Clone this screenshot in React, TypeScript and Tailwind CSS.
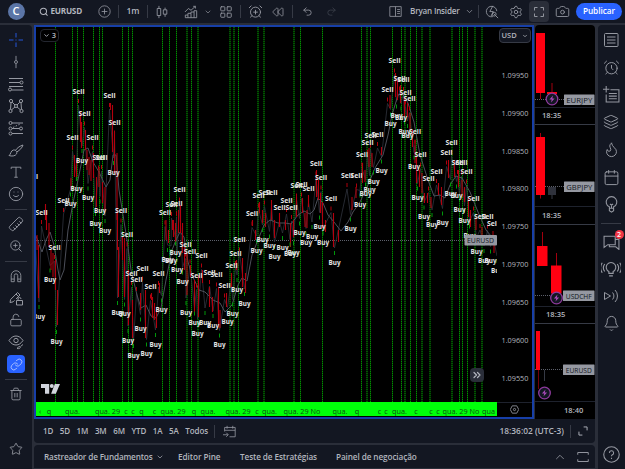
import React from 'react';
import {
  AlarmClock,
  AlarmClockPlus,
  Bell,
  Calendar,
  Camera,
  ChevronDown,
  ChevronsRight,
  ChevronUp,
  Flame,
  Layers,
  LayoutGrid,
  Lightbulb,
  Link,
  LockOpen,
  Redo2,
  Rewind,
  Ruler,
  Search,
  Settings,
  Smile,
  Star,
  Trash2,
  Undo2,
  ZoomIn,
} from 'lucide-react';

type Point = [number, number];

const FONT = "font-['Open_Sans','Noto_Sans',sans-serif]";

const Glyph: React.FC<{ children: React.ReactNode; size?: number; className?: string }> = ({
  children,
  size = 16,
  className = '',
}) => (
  <svg
    width={size}
    height={size}
    viewBox="0 0 16 16"
    fill="none"
    stroke="currentColor"
    strokeWidth="1"
    className={`shrink-0 ${className}`}
  >
    {children}
  </svg>
);

// x positions of the session lines; the faint ones fall between two pixels
const brightLines = [
  55.5, 72.5, 77.5, 83.5, 93.5, 99.5, 102.5, 122.5, 128.5, 132.5, 162.5, 169.5, 176.5, 191.5, 238.5, 300.5, 322.5,
  361.5, 370.5, 392.5, 401.5, 410.5, 416.5, 459.5, 462.5, 467.5,
];
const faintLines = [187, 198, 230, 234, 258, 264, 294, 367, 405, 422, 430, 452, 475, 482];

const sells: Point[] = [
  [32, 176], [41.5, 212], [54.5, 247], [63.5, 200], [72.5, 137.5], [78.5, 91], [84.5, 113.5], [92.5, 137.5],
  [98.5, 157.5], [101.5, 157], [109.5, 95], [114.5, 122.5], [121, 210.5], [127, 234.5], [131.5, 273], [136.5, 279],
  [142.5, 268.5], [150.5, 286.5], [158.5, 273], [165, 212.5], [171.5, 204], [176.5, 203.5], [179.5, 189.5],
  [185.5, 244.5], [190, 251.5], [196.5, 275.5], [201.5, 255.5], [209.5, 272], [216.5, 274.5], [224.5, 285.5],
  [231.5, 265.5], [235.5, 253], [239.5, 239.5], [252, 213.5], [258.5, 195.5], [264.5, 192.5], [271.5, 192.5],
  [279.5, 207.5], [286.5, 200], [291.5, 207], [296.5, 185.5], [301.5, 184.5], [308.5, 188.5], [316, 163.5],
  [321, 177.5], [331, 198.5], [347, 175], [356.5, 175.5], [362, 154.5], [367.5, 142], [370.5, 135.5], [377.5, 134],
  [387.5, 89.5], [394.5, 60.5], [399.5, 78.5], [403.5, 79], [405.5, 92.5], [409.5, 98.5], [415, 131.5],
  [420.5, 154.5], [428.5, 178.5], [436.5, 171], [446.5, 152.5], [451.5, 142], [457.5, 162], [461.5, 162.5],
  [466.5, 171.5], [473.5, 198.5], [480, 216], [487.5, 216.5], [493, 223],
];

const buys: Point[] = [
  [39, 316], [50, 279.5], [56.5, 341], [70.5, 203.5], [76.5, 188], [82, 160], [88, 197.5], [95.5, 223],
  [100, 210.5], [105, 230], [113.5, 172], [117.5, 312], [124.5, 313.5], [128, 340], [133.5, 355], [140.5, 328.5],
  [146.5, 353.5], [155.5, 344], [161.5, 309.5], [167.5, 259], [171, 260], [175.5, 252.5], [177, 269],
  [182.5, 281.5], [186, 312], [194.5, 322.5], [197.5, 333], [205, 322], [213, 325], [219.5, 344.5], [227.5, 321.5],
  [232.5, 313.5], [237, 289], [244.5, 303], [256.5, 250], [262.5, 239], [269.5, 245.5], [274.5, 256], [282.5, 247],
  [290, 253.5], [293.5, 252], [299.5, 232.5], [306, 242.5], [312, 236], [319.5, 226.5], [323, 242.5], [334.5, 262],
  [350.5, 228.5], [360, 204.5], [365.5, 193.5], [369.5, 189.5], [373.5, 181.5], [381.5, 170.5], [390.5, 123.5],
  [396.5, 115.5], [401, 117.5], [404.5, 131.5], [407.5, 135], [414, 166.5], [417.5, 197.5], [424, 216.5],
  [432, 224], [442.5, 222.5], [450.5, 193.5], [456.5, 195.5], [459.5, 209], [464.5, 220], [469.5, 235.5],
  [476.5, 251.5], [484, 260], [490.5, 260.5], [497, 270],
];

// [x, top, bottom]
const candles: [number, number, number][] = [
  [37, 235, 250], [38.5, 245, 298], [45.5, 204, 220], [46.5, 210, 230], [49, 223, 247], [51, 250, 270],
  [53, 253, 277], [55.5, 260, 290], [57.5, 290, 325], [71, 178, 190], [74.5, 155, 177], [76.5, 160, 180],
  [80.5, 112, 142], [81.5, 122, 148], [85.5, 130, 150], [87, 150, 170], [89, 157, 175], [91, 160, 181],
  [93.5, 153, 178], [96.5, 177, 207], [99, 167, 187], [102.5, 182, 203], [105, 187, 212], [110.5, 103, 110],
  [112.5, 105, 152], [114.5, 132, 173], [117, 153, 220], [117.5, 213, 250], [118.5, 247, 297], [122.5, 237, 260],
  [124.5, 238, 297], [128.5, 270, 325], [132.5, 300, 338], [140.5, 293, 310], [145.5, 290, 338], [151.5, 293, 300],
  [152.5, 297, 318], [154.5, 303, 320], [156.5, 310, 328], [159.5, 283, 293], [166, 220, 240], [168.5, 230, 243],
  [172.5, 220, 230], [173.5, 220, 237], [175.5, 223, 243], [178.5, 210, 233], [180.5, 205, 233], [182.5, 223, 253],
  [184.5, 247, 270], [187, 253, 295], [190.5, 265, 277], [194.5, 280, 313], [198.5, 275, 317], [202.5, 270, 283],
  [209.5, 287, 307], [212.5, 297, 312], [218.5, 287, 327], [220, 310, 328], [226.5, 293, 307], [231.5, 273, 287],
  [236.5, 260, 270], [242.5, 258, 287], [245.5, 273, 293], [252.5, 220, 226], [255.5, 230, 240], [259.5, 202, 213],
  [262.5, 210, 223], [265.5, 213, 227], [271.5, 200, 220], [274.5, 220, 238], [279.5, 213, 227], [285.5, 220, 230],
  [290.5, 223, 247], [293.5, 220, 237], [296.5, 197, 217], [302.5, 198, 213], [305, 213, 227], [307, 210, 228],
  [308.5, 195, 207], [316.5, 170, 197], [318.5, 180, 200], [320.5, 193, 213], [322.5, 202, 228], [325.5, 220, 232],
  [333.5, 213, 247], [338.5, 230, 242], [352, 197, 210], [356, 187, 198], [362.5, 163, 183], [365, 170, 182],
  [369, 148, 167], [372, 153, 167], [381.5, 147, 155], [390, 95, 108], [395.5, 73, 97], [397.5, 80, 100],
  [400.5, 85, 103], [404.5, 97, 117], [407.5, 103, 117], [410, 113, 130], [412.5, 130, 147], [415, 140, 163],
  [416.5, 157, 183], [419.5, 170, 187], [422, 173, 193], [424.5, 193, 203], [427.5, 193, 203], [431, 197, 208],
  [438.5, 183, 195], [441.5, 187, 205], [448.5, 160, 178], [454.5, 160, 177], [458.5, 170, 187], [462, 180, 197],
  [464.5, 187, 202], [468.5, 197, 217], [470.5, 210, 227], [476, 217, 230], [482, 227, 237], [494, 240, 253],
];

const average =
  '36,236 42,252 46,240 50,232 54,245 58,270 60,280 64,270 68,230 73,203 78,180 84,150 88,148 93,162 99,172 106,187 110,180 113,155 116,155 119,190 123,215 127,240 131,270 137,295 141,308 146,305 151,316 156,318 161,308 166,280 172,250 176,240 180,232 184,237 188,262 192,275 199,290 205,292 213,300 220,303 225,312 232,305 238,285 242,278 247,281 252,255 258,240 264,225 270,220 278,223 285,223 291,224 298,215 304,211 310,214 314,210 318,198 323,203 328,215 334,222 341,231 348,222 353,212 360,202 368,185 375,168 383,155 388,135 392,115 398,95 402,93 408,103 414,122 420,155 428,180 434,196 440,195 445,198 450,185 456,176 462,178 470,192 478,212 486,230 497,243';

const swing = [...sells.map(([x, y]) => [x, y + 14]), ...buys.map(([x, y]) => [x, y - 14])]
  .sort((a, b) => a[0] - b[0])
  .map((p) => p.join(','))
  .join(' ');

const dates: [number, string][] = [
  [40, '‹'], [49, 'q'], [72.5, 'qua.'], [107.5, 'qua. 29'], [126, 'c'], [133, 'c'], [141.5, 'q'], [154.5, 'c'],
  [173, 'qua. 29'], [194, 'q'], [208, 'qua.'], [238, 'qua. 29'], [257, 'c'], [269.5, 'qua.'], [302, 'qua. 29 No'],
  [340, 'qua.'], [357, 'q'], [379.5, 'c'], [386, 'c'], [399.5, 'qua.'], [416, 'c'], [431, 'c'], [438, 'c'],
  [461, 'qua. 29 No'], [488.5, 'qua'],
];

const prices = ['1.09950', '1.09900', '1.09850', '1.09800', '1.09750', '1.09700', '1.09650', '1.09600', '1.09550'];

const Plot: React.FC = () => (
  <svg width="461" height="375" viewBox="36 27 461 375" className="block">
    {[...brightLines, ...faintLines].map((x) => (
      <g key={x}>
        <line x1={x} x2={x} y1="27" y2="402" stroke="#003800" />
        <line x1={x} x2={x} y1="27" y2="402" stroke="#009000" strokeDasharray="1 1" />
      </g>
    ))}
    <line x1="36" x2="497" y1="240.5" y2="240.5" stroke="#5d606b" strokeDasharray="1 1" />
    <polyline points={swing} fill="none" stroke="#30333d" strokeWidth="0.8" />
    <polyline points={average} fill="none" stroke="#4c4f59" strokeWidth="1" />
    {candles.map(([x, top, bottom]) => (
      <line key={`${x}-${top}`} x1={x} x2={x} y1={top} y2={bottom} stroke="#b4000e" strokeWidth="1.1" />
    ))}
    {sells.map(([x, y]) => (
      <line key={`s${x}`} x1={x} x2={x} y1={y + 8} y2={y + 12} stroke="#b0000d" />
    ))}
    {buys.map(([x, y]) => (
      <line key={`b${x}`} x1={x} x2={x} y1={y - 11} y2={y - 7} stroke="#00960a" />
    ))}
    <g fill="#e6e6e6" fontSize="7.8" fontWeight="700" textAnchor="middle">
      {sells.map(([x, y]) => (
        <text key={`st${x}`} x={x} y={y + 2.7} textLength="12" lengthAdjust="spacingAndGlyphs">
          Sell
        </text>
      ))}
      {buys.map(([x, y]) => (
        <text key={`bt${x}`} x={x} y={y + 2.6} textLength="12" lengthAdjust="spacingAndGlyphs">
          Buy
        </text>
      ))}
    </g>
    <rect x="464.5" y="235" width="32.5" height="10.5" rx="1" fill="#9598a1" />
    <text x="480.5" y="243" fontSize="7.5" textAnchor="middle" fill="#131722" textLength="27" lengthAdjust="spacingAndGlyphs">
      EURUSD
    </text>
    <g fill="#d1d4dc">
      <path d="M41 384h8.2v9.8h-4.2v-5.8H41z" />
      <circle cx="51.8" cy="386" r="2" />
      <path d="M54.8 384H60l-4.2 9.8h-4.7z" />
    </g>
  </svg>
);

const Bolt: React.FC<{ x: number; y: number }> = ({ x, y }) => (
  <g transform={`translate(${x} ${y})`}>
    <circle r="5.8" fill="#131722" stroke="#8e3a9d" strokeWidth="1.3" />
    <path d="M1 -3.4L-2.6 0.5H-0.3L-1 3.4L2.6 -0.5H0.3z" fill="#a84ab8" />
  </g>
);

const MiniChart: React.FC<{
  symbol: string;
  time: string;
  plotClass: string;
  timeClass: string;
  height: number;
  line: number;
  labelX: number;
  children: React.ReactNode;
}> = ({ symbol, time, plotClass, timeClass, height, line, labelX, children }) => (
  <div className="flex flex-col bg-black">
    <div className={`border-b border-[#1e222d] ${plotClass}`}>
      <svg width="60" height={height} viewBox={`0 0 60 ${height}`} className="block">
        <line x1="0" x2={labelX} y1={line} y2={line} stroke="#5d606b" strokeDasharray="1 1" />
        {children}
        <rect x={labelX} y={line - 5} width={59.5 - labelX} height="10.5" rx="0.5" fill="#9598a1" />
        <text
          x={(labelX + 59.5) / 2}
          y={line + 3}
          fontSize="7.5"
          textAnchor="middle"
          fill="#131722"
          textLength="26"
          lengthAdjust="spacingAndGlyphs"
        >
          {symbol}
        </text>
      </svg>
    </div>
    <div className={`flex items-center text-[7.6px] font-semibold text-[#b2b5be] ${timeClass}`}>{time}</div>
  </div>
);

const Separator = () => <div className="h-[13px] w-px shrink-0 bg-[#363a45]" />;

const Header: React.FC = () => (
  <header className="flex h-[23px] shrink-0 items-center bg-[#131722] text-[#9598a1]">
    <div className="flex w-8 shrink-0 justify-center">
      <div className="flex h-[17px] w-[17px] items-center justify-center rounded-full bg-[#5b75a6] text-[11px] font-semibold text-white">
        C
      </div>
    </div>
    <div className="flex w-[58px] shrink-0 items-center gap-[2px] pl-[7px] text-[#b2b5be]">
      <Search size={9.5} strokeWidth={2.6} className="shrink-0" />
      <span className="text-[8.2px] font-bold tracking-[-0.25px]">EURUSD</span>
    </div>
    <div className="flex w-7 shrink-0 justify-center">
      <Glyph size={13}>
        <circle cx="8" cy="8" r="7" />
        <path d="M8 4.5v7M4.5 8h7" />
      </Glyph>
    </div>
    <Separator />
    <div className="w-7 shrink-0 text-center text-[8.6px] font-semibold text-[#b2b5be]">1m</div>
    <Separator />
    <div className="flex w-7 shrink-0 justify-center">
      <Glyph size={14}>
        <path d="M4.5 1v3M4.5 12v3M2.5 4h4v8h-4zM11.5 3v2.500M11.5 10.500v3M9.500 5.500h4v5h-4z" />
      </Glyph>
    </div>
    <div className="flex w-[29px] shrink-0 justify-center">
      <Glyph size={14}>
        <path d="M1.500 14.500v-3h3v-2h3.500v-1.500h3.500v-1.500h3v8zM4.500 11.500v3M8 9.500v5M11.500 8v6.500M1 8l4-4 3 2 5-4.500M10.500 1.500h2.500v2.500" />
      </Glyph>
    </div>
    <div className="flex w-1.5 shrink-0 justify-center">
      <ChevronDown size={8} className="shrink-0" />
    </div>
    <div className="flex w-[29px] shrink-0 justify-center">
      <LayoutGrid size={14} strokeWidth={1.5} />
    </div>
    <Separator />
    <div className="flex w-7 shrink-0 justify-center">
      <AlarmClockPlus size={15} strokeWidth={1.5} />
    </div>
    <div className="flex w-[23px] shrink-0 justify-start pl-[3px]">
      <Rewind size={12} strokeWidth={1.6} />
    </div>
    <Separator />
    <div className="flex w-7 shrink-0 justify-center">
      <Undo2 size={11} strokeWidth={1.8} />
    </div>
    <div className="flex w-5 shrink-0 justify-center text-[#3c404b]">
      <Redo2 size={11} strokeWidth={1.8} />
    </div>
    <div className="flex min-w-0 flex-1 items-center justify-end">
      <Glyph size={13} className="mr-[8px]">
        <path d="M1 2h14v12H1zM8 2v12M10 5.500h3.500M10 8h3.500M10 10.500h3.500" />
      </Glyph>
      <span className="w-[53px] whitespace-nowrap text-[8.1px] font-semibold tracking-[-0.2px] text-[#b2b5be]">
        Bryan Insider
      </span>
      <ChevronDown size={9} className="ml-0.5 mr-1" />
      <Separator />
      <div className="flex w-[26px] justify-center">
        <Glyph size={14}>
          <path d="M13.500 7A6 6 0 1 0 9 13.300M11.700 11.700L15 15M9.800 9.800l2 2M9 1L5.500 7.500h4L7 12.500" />
          <circle cx="10.500" cy="10.500" r="2.200" />
        </Glyph>
      </div>
      <div className="flex w-6 pl-[4px]">
        <Settings size={14} strokeWidth={1.5} />
      </div>
      <div className="flex h-[21px] w-5 items-center justify-center rounded-sm bg-[#2a2e39]">
        <Glyph size={12}>
          <path d="M2 6V2h4M10 2h4v4M14 10v4h-4M6 14H2v-4" strokeWidth="1.3" />
        </Glyph>
      </div>
      <div className="flex w-[27px] justify-center">
        <Camera size={15} strokeWidth={1.4} />
      </div>
      <button className="mr-[3px] h-[17px] w-[46px] rounded-full bg-[#2962ff] text-[8.2px] font-semibold text-white">
        Publicar
      </button>
    </div>
  </header>
);

const Cell: React.FC<{ children: React.ReactNode }> = ({ children }) => (
  <div className="flex h-[22px] w-full shrink-0 items-center justify-center">{children}</div>
);

const Rule = () => <div className="my-[3.5px] h-px w-[22px] shrink-0 bg-[#363a45]" />;

const DrawingBar: React.FC = () => (
  <aside className="flex w-8 shrink-0 flex-col items-center rounded-tr-sm bg-[#131722] pt-[4px] text-[#9598a1]">
    <Cell>
      <Glyph className="text-[#2456d8]">
        <path d="M8 1v4.500M8 10.500v4.500M1 8h4.500M10.500 8h4.500M7.500 8h1" />
      </Glyph>
    </Cell>
    <Cell>
      <Glyph size={14}>
        <path d="M8 1v5M8 10v5" />
        <circle cx="8" cy="8" r="1.700" />
      </Glyph>
    </Cell>
    <Cell>
      <Glyph>
        <path d="M1 2.500h14M1 6.500h11M1 10.500h14M3.500 14h12" />
        <circle cx="13.500" cy="6.500" r="1.500" />
        <circle cx="2" cy="13.500" r="1.500" />
      </Glyph>
    </Cell>
    <Cell>
      <Glyph>
        <circle cx="3" cy="3" r="1.600" />
        <circle cx="13" cy="3" r="1.600" />
        <circle cx="8" cy="8" r="1.500" />
        <circle cx="2.500" cy="13" r="1.600" />
        <circle cx="13.500" cy="13" r="1.600" />
        <path d="M3 4.600L2.500 11.400M13 4.600l.5 6.800M4.200 4.200l2.800 2.800M11.800 4.200L9 7M3.600 11.800L7 9M12.400 11.800L9 9" />
      </Glyph>
    </Cell>
    <Cell>
      <Glyph>
        <circle cx="2.500" cy="3" r="1.500" />
        <circle cx="2.500" cy="8.500" r="1.500" />
        <circle cx="2.500" cy="13.500" r="1.500" />
        <circle cx="13" cy="8.500" r="1.500" />
        <path d="M4 3h11M4 13.500h11M4 8.500h7.500" />
        <path d="M5 7.500L13 3.500" strokeDasharray="1.500 1.500" />
      </Glyph>
    </Cell>
    <Cell>
      <Glyph>
        <path d="M1 13.500c2-1 1.500-5 4.500-5.500 2.500-.3 4 2 3 4-1.200 2.200-5 2.500-7.500 1.500zM7.500 8.300C9.500 5.500 12 4 15 3c-1 3-3 5-6.200 7" />
      </Glyph>
    </Cell>
    <Cell>
      <Glyph size={14}>
        <path d="M2.500 4.500V2.500h11v2M8 2.500v11.500M6 14h4" />
      </Glyph>
    </Cell>
    <Cell>
      <Smile size={16} strokeWidth={1.4} />
    </Cell>
    <Rule />
    <Cell>
      <Ruler size={16} strokeWidth={1.4} className="rotate-90" />
    </Cell>
    <Cell>
      <ZoomIn size={14} strokeWidth={1.5} />
    </Cell>
    <Rule />
    <Cell>
      <Glyph size={14}>
        <path d="M2.500 14.500V7.500a5.500 5.500 0 0 1 11 0v7h-3.500V7.500a2 2 0 0 0-4 0v7zM2.500 11.500H6M10 11.500h3.500" />
      </Glyph>
    </Cell>
    <Cell>
      <Glyph>
        <path d="M2 12.500l.6-3L9.500 2.500l2.500 2.500-4 4M2 12.500l3-.6 1.500-1.500M8 4l2.500 2.500" />
        <path d="M8.500 10.500h6v4.500h-6zM10 10.500V9a1.500 1.500 0 0 1 3 0" />
      </Glyph>
    </Cell>
    <Cell>
      <LockOpen size={14} strokeWidth={1.5} />
    </Cell>
    <Cell>
      <Glyph>
        <path d="M1 6.500C3 3.500 5.300 2 8 2s5 1.500 7 4.500C13 9.500 10.700 11 8 11S3 9.500 1 6.500z" />
        <circle cx="8" cy="6.500" r="2.200" />
        <path d="M9 14.500c1-.3 1-2 2.300-2 1.200 0 1.400 1.300.4 1.800-.8.400-1.900.4-2.700.2zM12.500 12.500L15 10.500" />
      </Glyph>
    </Cell>
    <Cell>
      <div className="flex h-[18px] w-[18px] items-center justify-center rounded-sm bg-[#2962ff] text-[#c3d2ff]">
        <Link size={13} strokeWidth={1.500} />
      </div>
    </Cell>
    <Rule />
    <Cell>
      <Trash2 size={14} strokeWidth={1.5} />
    </Cell>
    <div className="mt-auto pb-[9px]">
      <Cell>
        <Star size={14} strokeWidth={1.5} />
      </Cell>
    </div>
  </aside>
);

const WidgetCell: React.FC<{ children: React.ReactNode }> = ({ children }) => (
  <div className="relative flex h-[27.500px] w-full shrink-0 items-center justify-center">{children}</div>
);

const WidgetBar: React.FC = () => (
  <aside className="flex w-[27.500px] shrink-0 flex-col items-center rounded-tl-sm bg-[#131722] pt-px text-[#9598a1]">
    <WidgetCell>
      <Glyph>
        <rect x="1.500" y="1.500" width="13.500" height="13" rx="1" />
        <path d="M4 5h8.500M4 8h8.500M4 11h8.500" />
      </Glyph>
    </WidgetCell>
    <WidgetCell>
      <AlarmClock size={17} strokeWidth={1.4} />
    </WidgetCell>
    <WidgetCell>
      <Glyph size={17}>
        <path d="M3 0v6M0 3h6M7 3.500h8v11.500H3V8M5.500 7H13M5.500 9.500H13M5.500 12H13" />
      </Glyph>
    </WidgetCell>
    <WidgetCell>
      <Layers size={16} strokeWidth={1.5} />
    </WidgetCell>
    <WidgetCell>
      <Flame size={17} strokeWidth={1.4} />
    </WidgetCell>
    <WidgetCell>
      <Calendar size={17} strokeWidth={1.4} />
    </WidgetCell>
    <WidgetCell>
      <Glyph size={17}>
        <path d="M6 11.500V10.200A5 5 0 1 1 10 10.200v1.300zM6 11.500v2.300l2 1.400 2-1.400v-2.300M8 11.500V8.500M6.500 7.500L8 8.500l1.500-1" />
      </Glyph>
    </WidgetCell>
    <div className="my-[4px] h-px w-5 shrink-0 bg-[#363a45]" />
    <WidgetCell>
      <Glyph size={17}>
        <path d="M1 3h10.500v8H4.500L1 13.500zM11.500 6H15v9.500L12 13H6v-2" />
      </Glyph>
      <span className="absolute right-[1.500px] top-[2px] flex h-[9px] w-[9px] items-center justify-center rounded-full bg-[#f23645] text-[7px] font-semibold leading-none text-white">
        2
      </span>
    </WidgetCell>
    <WidgetCell>
      <Glyph size={20}>
        <path d="M6.300 11.500V10A3.800 3.800 0 1 1 9.700 10v1.500zM6.500 13.500h3M3 4a5 5 0 0 0 0 6M1 3a7 7 0 0 0 0 8M13 4a5 5 0 0 1 0 6M15 3a7 7 0 0 1 0 8" strokeWidth="0.9" />
      </Glyph>
    </WidgetCell>
    <WidgetCell>
      <Glyph>
        <path d="M1.500 4.500v7L7.500 8zM9.500 4.500a5 5 0 0 1 0 7M12 2a8.500 8.500 0 0 1 0 12" />
      </Glyph>
    </WidgetCell>
    <WidgetCell>
      <Bell size={17} strokeWidth={1.4} />
    </WidgetCell>
    <div className="mt-auto pb-[6.500px]">
      <Glyph size={17}>
        <circle cx="8" cy="8" r="7.300" />
        <path d="M6 6.500a2 2 0 1 1 2.800 1.800c-.6.300-.8.600-.8 1.400M8 11v1.200" />
      </Glyph>
    </div>
  </aside>
);

const ranges = ['1D', '5D', '1M', '3M', '6M', 'YTD', '1A', '5A', 'Todos'];

const App: React.FC = () => (
  <div className={`flex h-[469px] w-[625px] flex-col gap-[2px] overflow-hidden bg-[#2a2e39] ${FONT}`}>
    <Header />
    <div className="flex min-h-0 flex-1">
      <DrawingBar />
      <div className="ml-[2px] flex min-w-0 flex-1 flex-col">
        {/* Charts */}
        <div className="flex h-[394px] shrink-0">
          <div className="relative w-[500px] shrink-0 border-2 border-[#173fa8] bg-black">
            <div className="flex h-[375px]">
              <Plot />
              <div className="flex flex-1 flex-col items-center">
                <div className="mt-px flex h-[15px] w-8 shrink-0 items-center justify-between rounded-sm border border-[#363a45] bg-[#131722] px-[2px] text-[7.5px] font-semibold text-[#b2b5be]">
                  USD
                  <ChevronDown size={6} strokeWidth={3} />
                </div>
                <div className="flex flex-col pl-px pt-[13.5px]">
                  {prices.map((price) => (
                    <div key={price} className="flex h-[37.900px] items-center text-[7.3px] font-medium leading-none text-[#b2b5be]">
                      {price}
                    </div>
                  ))}
                </div>
              </div>
            </div>
            <div className="flex h-[14px]">
              <svg width="461" height="14" viewBox="36 402 461 14" className="block shrink-0 bg-[#00ff0a]">
                {dates.map(([x, label]) => (
                  <text key={x} x={x} y="413.500" fontSize="7.3" fontWeight="500" textAnchor="middle" fill="#0d4f12">
                    {label}
                  </text>
                ))}
              </svg>
              <div className="flex flex-1 items-center justify-center border-t border-[#1e222d] text-[#9598a1]">
                <Glyph size={9}>
                  <path d="M4 1.500h8L15.500 8 12 14.500H4L.5 8z" strokeWidth="1.500" />
                  <circle cx="8" cy="8" r="2" strokeWidth="1.500" />
                </Glyph>
              </div>
            </div>
            <div className="absolute left-[4px] top-[2px] flex h-[13px] w-[19px] items-center justify-center gap-[2px] rounded-sm border border-[#23262f] bg-black text-[7.500px] font-semibold text-[#b2b5be]">
              <ChevronDown size={7} strokeWidth={3} />3
            </div>
            <div className="absolute left-[434px] top-[341px] flex h-[14px] w-[14px] items-center justify-center rounded-sm bg-[#2a2e39] text-[#b2b5be]">
              <ChevronsRight size={12} strokeWidth={2.4} />
            </div>
          </div>

          <div className="ml-[1px] flex w-[60px] shrink-0 flex-col gap-px overflow-hidden rounded-t-sm bg-[#363a45]">
            <MiniChart symbol="EURJPY" time="18:35" plotClass="h-[83px]" timeClass="h-4 pl-[7px]" height={82} line={74.5} labelX={29}>
              <path d="M5.500 68v6M17 58v10" stroke="#a3000e" />
              <rect x="1" y="8" width="9" height="60" fill="#ff0011" />
              <rect x="12" y="67" width="10" height="2" fill="#ff0011" />
              <Bolt x={17} y={74} />
            </MiniChart>
            <MiniChart symbol="GBPJPY" time="18:35" plotClass="h-[82px]" timeClass="h-[17px] pl-[7px]" height={81} line={61.5} labelX={29}>
              <path d="M5.500 8v65.500" stroke="#a3000e" />
              <path d="M17 70v4" stroke="#363a45" />
              <rect x="1" y="12" width="9" height="58" fill="#ff0011" />
              <rect x="13" y="62" width="8" height="8" fill="#2f323c" />
            </MiniChart>
            <MiniChart symbol="USDCHF" time="18:35" plotClass="h-[82px]" timeClass="h-4 pl-[11px]" height={81} line={70.5} labelX={28}>
              <path d="M7.500 7v14M21.500 28v14" stroke="#a3000e" />
              <rect x="2" y="21" width="10.500" height="20" fill="#ff0011" />
              <rect x="16" y="40.500" width="10.500" height="28" fill="#ff0011" />
              <Bolt x={21.5} y={73} />
            </MiniChart>
            <MiniChart symbol="EURUSD" time="18:40" plotClass="h-[78px]" timeClass="h-[17px] pl-[29px]" height={77} line={45.500} labelX={28}>
              <path d="M3.500 46v19" stroke="#70000a" />
              <path d="M9.500 46v11" stroke="#363a45" />
              <rect x="1" y="7" width="4" height="39" fill="#ff0011" />
              <Bolt x={9.5} y={69} />
            </MiniChart>
          </div>
        </div>

        {/* Date ranges */}
        <div className="flex h-[24px] w-[561px] shrink-0 items-center rounded-b-sm bg-[#131722] pl-[9px] text-[8px] font-semibold text-[#b2b5be]">
          <div className="flex w-[165px] shrink-0 justify-between tracking-[-0.1px]">
            {ranges.map((range) => (
              <span key={range}>{range}</span>
            ))}
          </div>
          <div className="ml-[6px] flex items-center gap-2">
            <Separator />
            <Glyph size={13} className="text-[#9598a1]">
              <path d="M2 8V3h13v11.500H8M2 6.500h13M5 1v3.500M12 1v3.500M0 12h6M4 9.500L6.500 12 4 14.500" />
            </Glyph>
          </div>
          <span className="ml-auto whitespace-nowrap text-[8.4px]">18:36:02 (UTC-3)</span>
          <div className="ml-[6px] mr-[7px] flex items-center gap-[7px]">
            <Separator />
            <Glyph size={10}>
              <path d="M9 1.500h5.500V7M1.500 9v5.500H7" strokeWidth="1.500" />
            </Glyph>
          </div>
        </div>

        {/* Bottom panels */}
        <div className="mt-[2px] flex h-[23px] w-[561px] shrink-0 items-center rounded-t-sm bg-[#131722] pl-[10px] pt-px text-[8.2px] font-semibold text-[#b2b5be]">
          <span className="w-[112px] shrink-0 whitespace-nowrap tracking-[-0.16px]">Rastreador de Fundamentos</span>
          <ChevronDown size={8} />
          <span className="ml-[14px] w-[62px] shrink-0 whitespace-nowrap tracking-[-0.05px]">Editor Pine</span>
          <span className="w-[96px] shrink-0 whitespace-nowrap tracking-[-0.1px]">Teste de Estratégias</span>
          <span className="whitespace-nowrap tracking-[-0.1px]">Painel de negociação</span>
          <div className="ml-auto flex items-center gap-[10px] pr-[6px] text-[#9598a1]">
            <ChevronUp size={14} strokeWidth={1.4} />
            <Glyph size={12}>
              <path d="M1 5V2h14v3M1 11v3h14v-3" strokeWidth="1.300" />
            </Glyph>
          </div>
        </div>
      </div>
      <div className="ml-[2px] flex">
        <WidgetBar />
      </div>
    </div>
  </div>
);

export default App;
